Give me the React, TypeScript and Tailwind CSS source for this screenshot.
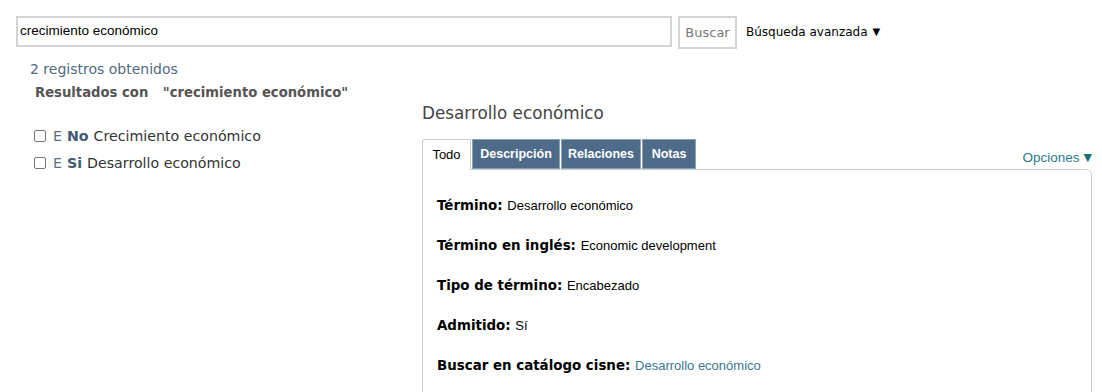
const sans = "font-['DejaVu_Sans',sans-serif]"
const narrow = "font-['Liberation_Sans',Arial,sans-serif]"

function Check() {
  return <span className="inline-block w-[12px] h-[12px] border border-[#777] rounded-[2px] bg-white mr-[7px]" />
}

function Row({ label, value, link }: { label: string; value: string; link?: boolean }) {
  return (
    <div className="h-[40px] leading-[20px]">
      <span className={`${sans} text-[13.4px] font-bold text-black`}>{label}: </span>
      <span className={`${narrow} text-[13px] ${link ? "text-[#3a7590]" : "text-black"}`}>{value}</span>
    </div>
  )
}

export default function App() {
  return (
    <div className={`${sans} bg-white w-[1102px] h-[392px] overflow-hidden`}>
      <div className="flex items-start pt-4 pl-4">
        <div className="w-[656px] h-[31px] border-2 border-[#d4d4d4] flex items-center px-[2px]">
          <span className={`${narrow} text-[13.5px] text-black`}>crecimiento económico</span>
        </div>
        <div className="ml-[6px] w-[59px] h-[33px] border-2 border-[#d4d4d4] flex items-center justify-center">
          <span className="text-[13px] text-[#777]">Buscar</span>
        </div>
        <div className="ml-[9px] h-[31px] flex items-center text-[12px] text-black">
          Búsqueda avanzada <span className="ml-[5px] text-[10px]">▼</span>
        </div>
      </div>

      <div className="flex">
        <div className="w-[406px] pl-[30px] pt-[10px]">
          <div className="text-[14px] leading-[20px] text-[#4f6b82]">2 registros obtenidos</div>
          <div className="pl-[5px] mt-[4px] text-[13.2px] leading-[20px] font-bold text-[#555]">
            Resultados con <span className="ml-[10px]">"crecimiento económico"</span>
          </div>
          <div className="pl-[4px] mt-[23px] flex flex-col gap-[7px]">
            <div className="flex items-center text-[14.2px] leading-[20px]">
              <Check />
              <span className="text-[#5a7086]">E</span>
              <span className="ml-[5px] font-bold text-[#3f5a73]">No</span>
              <span className="ml-[5px] text-[#333]">Crecimiento económico</span>
            </div>
            <div className="flex items-center text-[14.2px] leading-[20px]">
              <Check />
              <span className="text-[#5a7086]">E</span>
              <span className="ml-[5px] font-bold text-[#3f5a73]">Si</span>
              <span className="ml-[5px] text-[#333]">Desarrollo económico</span>
            </div>
          </div>
        </div>

        <div className="w-[670px] ml-[16px] pt-[54px]">
          <div className="text-[16.8px] leading-[20px] text-[#444]">Desarrollo económico</div>
          <div className="mt-[16px] flex items-end">
            <div className={`${narrow} relative z-10 -mb-px h-[31px] w-[49px] bg-white border border-b-0 border-[#ccc] rounded-tl-[3px] flex items-center justify-center text-[13px] text-black`}>
              Todo
            </div>
            <div className={`${narrow} h-[30px] ml-[1px] w-[88px] bg-[#4e6b8a] border border-[#8ea2b6] flex items-center justify-center text-[12.5px] font-bold text-white`}>
              Descripción
            </div>
            <div className={`${narrow} h-[30px] ml-[1px] w-[80px] bg-[#4e6b8a] border border-[#8ea2b6] flex items-center justify-center text-[12.5px] font-bold text-white`}>
              Relaciones
            </div>
            <div className={`${narrow} h-[30px] ml-[1px] w-[54px] bg-[#4e6b8a] border border-[#8ea2b6] flex items-center justify-center text-[12.5px] font-bold text-white`}>
              Notas
            </div>
            <div className="ml-auto mb-[1px] text-[#2b7b8c] flex items-center">
              <span className={`${narrow} text-[13.5px]`}>Opciones</span>
              <span className="ml-[4px] text-[11px] text-[#1d6e7d]">▼</span>
            </div>
          </div>
          <div className="border border-[#ccc] rounded-tr-[6px] pl-[14px] pt-[25px] h-[260px]">
            <Row label="Término" value="Desarrollo económico" />
            <Row label="Término en inglés" value="Economic development" />
            <Row label="Tipo de término" value="Encabezado" />
            <Row label="Admitido" value="Sí" />
            <Row label="Buscar en catálogo cisne" value="Desarrollo económico" link />
          </div>
        </div>
      </div>
    </div>
  )
}
